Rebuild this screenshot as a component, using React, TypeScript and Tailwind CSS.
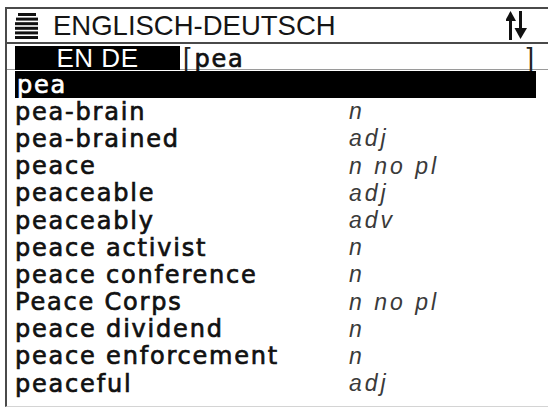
import React from 'react';

type Entry = { word: string; pos: string };

const entries: Entry[] = [
  { word: 'pea', pos: '' },
  { word: 'pea-brain', pos: 'n' },
  { word: 'pea-brained', pos: 'adj' },
  { word: 'peace', pos: 'n no pl' },
  { word: 'peaceable', pos: 'adj' },
  { word: 'peaceably', pos: 'adv' },
  { word: 'peace activist', pos: 'n' },
  { word: 'peace conference', pos: 'n' },
  { word: 'Peace Corps', pos: 'n no pl' },
  { word: 'peace dividend', pos: 'n' },
  { word: 'peace enforcement', pos: 'n' },
  { word: 'peaceful', pos: 'adj' },
];

const wordFont: React.CSSProperties = {
  fontFamily: '"DejaVu Sans", sans-serif',
  WebkitTextStroke: '0.7px currentColor',
};

function MenuGlyph() {
  return (
    <svg width="24" height="26" viewBox="0 0 24 26" className="shrink-0">
      <rect x="3" y="0" width="18" height="3" fill="#111" />
      <rect x="1" y="4.6" width="22" height="3" fill="#111" />
      <rect x="0" y="9.2" width="23" height="3" fill="#111" />
      <rect x="0" y="13.8" width="23" height="3" fill="#111" />
      <rect x="0" y="18.4" width="23" height="3" fill="#111" />
      <rect x="0" y="23" width="23" height="3" fill="#111" />
    </svg>
  );
}

function SwapArrows() {
  return (
    <svg width="22" height="29" viewBox="0 0 22 29" className="shrink-0">
      {/* up arrow */}
      <polygon points="4.5,0 10,10 -1,10" fill="#111" />
      <rect x="3" y="8" width="3" height="21" fill="#111" />
      {/* down arrow */}
      <rect x="13" y="0" width="3" height="19" fill="#111" />
      <polygon points="8.5,17 21,17 14.5,28" fill="#111" />
    </svg>
  );
}

export default function App() {
  return (
    <div className="w-[548px] h-[412px] bg-white overflow-hidden">
      <div
        className="ml-[5px] mt-[7px] w-[543px] h-[400px] border-t-2 border-l-2 border-b border-[#4a4a4a] border-b-[#d4d4d4] flex flex-col"
        style={{ fontFamily: '"Liberation Sans", Arial, sans-serif' }}
      >
        {/* title bar */}
        <div className="h-[33px] flex items-center pl-[8px] pr-[20px]">
          <MenuGlyph />
          <span className="ml-[14px] text-[27.5px] leading-none text-[#151515]">
            ENGLISCH-DEUTSCH
          </span>
          <div className="ml-auto">
            <SwapArrows />
          </div>
        </div>

        {/* search line */}
        <div className="h-[28px] border-t-2 border-[#4a4a4a] flex items-start pt-[2px] pl-[8px] border-b border-b-[#9a9a9a]">
          <div className="w-[165px] h-[24px] bg-black text-white flex items-center justify-center text-[26px] leading-none tracking-[0.5px]">
            EN DE
          </div>
          <span className="ml-[3px] text-[27px] leading-[24px] text-[#222]">[</span>
          <span className="ml-[4px] text-[24px] leading-[26px] text-[#111] tracking-[1.8px]" style={wordFont}>
            pea
          </span>
          <span className="ml-auto mr-[14px] text-[27px] leading-[24px] text-[#222]">]</span>
        </div>

        {/* result list */}
        <div className="ml-[8px] w-[521px] pt-[1px] flex flex-col">
          {entries.map((e, i) => (
            <div
              key={e.word}
              className={
                'h-[27.2px] flex items-center ' + (i === 0 ? 'bg-black text-white' : 'text-[#111]')
              }
            >
              <span
                className={'w-[334px] text-[24px] leading-none tracking-[1.8px] ' + (i === 0 ? 'pl-[2px]' : '')}
                style={wordFont}
              >
                {e.word}
              </span>
              <span className="italic text-[23px] leading-none text-[#3a3a3a] tracking-[3px]">{e.pos}</span>
            </div>
          ))}
        </div>
      </div>
    </div>
  );
}
